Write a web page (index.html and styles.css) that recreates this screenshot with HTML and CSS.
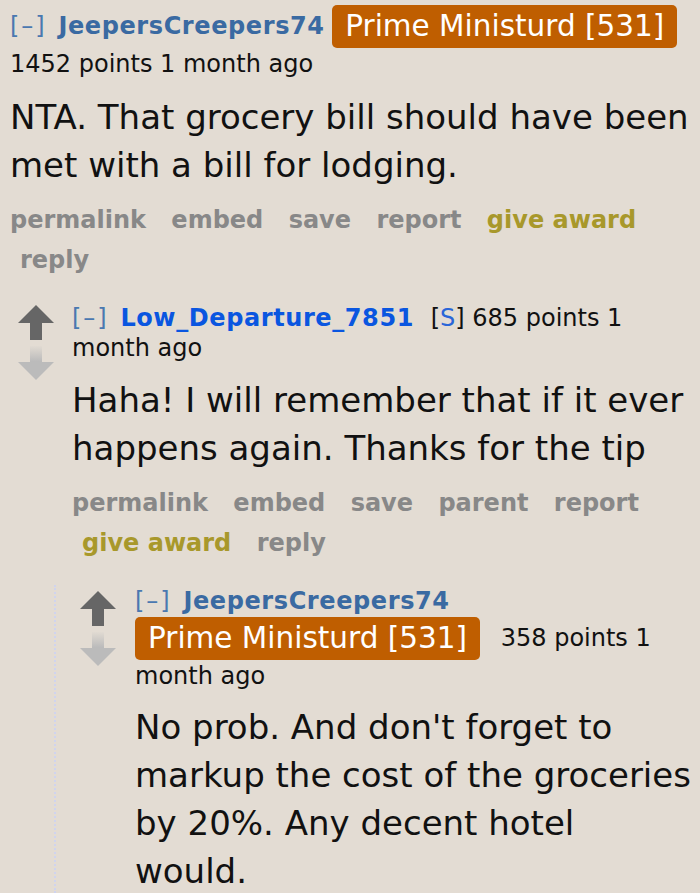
FILE: index.html
```html
<!DOCTYPE html>
<html>
<head>
<meta charset="utf-8">
<link rel="stylesheet" href="styles.css">
</head>
<body>
<div class="thread">
  <div class="comment top">
    <div class="entry">
      <p class="tagline"><a class="expand">[–]</a> <a class="author">JeepersCreepers74</a> <span class="flair">Prime Ministurd [531]</span> <span class="score">1452 points</span> <time>1 month ago</time></p>
      <div class="md">NTA. That grocery bill should have been met with a bill for lodging.</div>
      <ul class="buttons">
        <li class="first"><a>permalink</a></li>
        <li><a>embed</a></li>
        <li><a>save</a></li>
        <li><a>report</a></li>
        <li><a class="award">give award</a></li>
        <li><a>reply</a></li>
      </ul>
    </div>
  </div>

  <div class="comment second">
    <div class="midcol">
      <svg class="arrow" width="36" height="36" viewBox="0 0 36 36"><polygon points="18,0 36,18 24,18 24,35 12,35 12,18 0,18" fill="#666"/></svg>
      <svg class="arrow" width="36" height="36" viewBox="0 0 36 36"><defs><linearGradient id="g1" x1="0" y1="0" x2="0" y2="1"><stop offset="0" stop-color="#bbb" stop-opacity="0.05"/><stop offset="0.45" stop-color="#bbb"/><stop offset="1" stop-color="#bbb"/></linearGradient></defs><polygon points="12,0 24,0 24,16 36,16 18,34 0,16 12,16" fill="url(#g1)"/></svg>
    </div>
    <div class="entry">
      <p class="tagline"><a class="expand">[–]</a> <a class="author submitter">Low_Departure_7851</a> <span class="userattrs">[<span class="s">S</span>]</span> <span class="score">685 points</span> <time>1 month ago</time></p>
      <div class="md">Haha! I will remember that if it ever happens again. Thanks for the tip</div>
      <ul class="buttons">
        <li class="first"><a>permalink</a></li>
        <li><a>embed</a></li>
        <li><a>save</a></li>
        <li><a>parent</a></li>
        <li><a>report</a></li>
        <li><a class="award">give award</a></li>
        <li><a>reply</a></li>
      </ul>
    </div>
  </div>

  <div class="child">
    <div class="comment third">
      <div class="midcol">
        <svg class="arrow" width="36" height="36" viewBox="0 0 36 36"><polygon points="18,0 36,18 24,18 24,35 12,35 12,18 0,18" fill="#666"/></svg>
        <svg class="arrow" width="36" height="36" viewBox="0 0 36 36"><defs><linearGradient id="g2" x1="0" y1="0" x2="0" y2="1"><stop offset="0" stop-color="#bbb" stop-opacity="0.05"/><stop offset="0.45" stop-color="#bbb"/><stop offset="1" stop-color="#bbb"/></linearGradient></defs><polygon points="12,0 24,0 24,16 36,16 18,34 0,16 12,16" fill="url(#g2)"/></svg>
      </div>
      <div class="entry">
        <p class="tagline"><a class="expand">[–]</a> <a class="author">JeepersCreepers74</a> <span class="flair">Prime Ministurd [531]</span> <span class="score">358 points</span> <time>1 month ago</time></p>
        <div class="md">No prob. And don't forget to markup the cost of the groceries by 20%. Any decent hotel would.</div>
      </div>
    </div>
  </div>
</div>
</body>
</html>
```

FILE: styles.css
```css
html, body {
  margin: 0;
  padding: 0;
  background: #e3dcd3;
}
body {
  font-family: "DejaVu Sans", Verdana, sans-serif;
  color: #111;
  overflow: hidden;
  height: 893px;
}
.thread {
  height: 893px;
  display: flex;
  flex-direction: column;
}
.comment {
  display: flex;
  align-items: flex-start;
}
.top {
  padding-left: 10px;
}
.entry {
  flex: 1;
  min-width: 0;
}
.tagline {
  margin: 0;
  font-size: 24px;
  line-height: 30px;
  color: #111;
}
.expand {
  color: #4a78b0;
  letter-spacing: 2px;
  margin-right: 4px;
}
.author {
  font-weight: bold;
  color: #3a6aa2;
  letter-spacing: 0.6px;
}
.author.submitter {
  color: #0a56e0;
}
.userattrs {
  color: #111;
  padding-left: 9px;
}
.userattrs .s {
  color: #2a66d8;
}
.flair {
  display: inline-block;
  background: #bf5e00;
  color: #fff;
  font-size: 29.5px;
  line-height: 43px;
  padding: 0 13px;
  border-radius: 5px;
  margin: 1px 13px 1px 0;
  vertical-align: middle;
}
.top .tagline {
  padding-top: 4px;
}
.md {
  font-size: 34px;
  line-height: 48px;
  margin: 14px 0 11px;
  padding-right: 5px;
  color: #111;
}
.buttons {
  list-style: none;
  margin: 0;
  padding: 0;
  font-size: 24px;
  line-height: 40px;
  font-weight: bold;
}
.buttons li {
  display: inline;
  padding: 0 7px 0 10px;
}
.buttons li.first {
  padding-left: 0;
}
.buttons a {
  color: #888;
}
.buttons a.award {
  color: #a8982b;
}
.second {
  padding-left: 18px;
  margin-top: 23px;
}
.second .md {
  margin-top: 13px;
}
.midcol {
  width: 36px;
  margin-right: 18px;
  display: flex;
  flex-direction: column;
  gap: 5px;
  padding-top: 2px;
}
.arrow {
  display: block;
}
.child {
  flex: 1;
  min-height: 0;
  margin-left: 54px;
  border-left: 2px dotted #d0d4ee;
  margin-top: 22px;
  padding-top: 1px;
  overflow: hidden;
}
.third {
  padding-left: 24px;
}
.third .midcol {
  margin-right: 19px;
  padding-top: 5px;
}
.third .md {
  margin-top: 12px;
}
```
